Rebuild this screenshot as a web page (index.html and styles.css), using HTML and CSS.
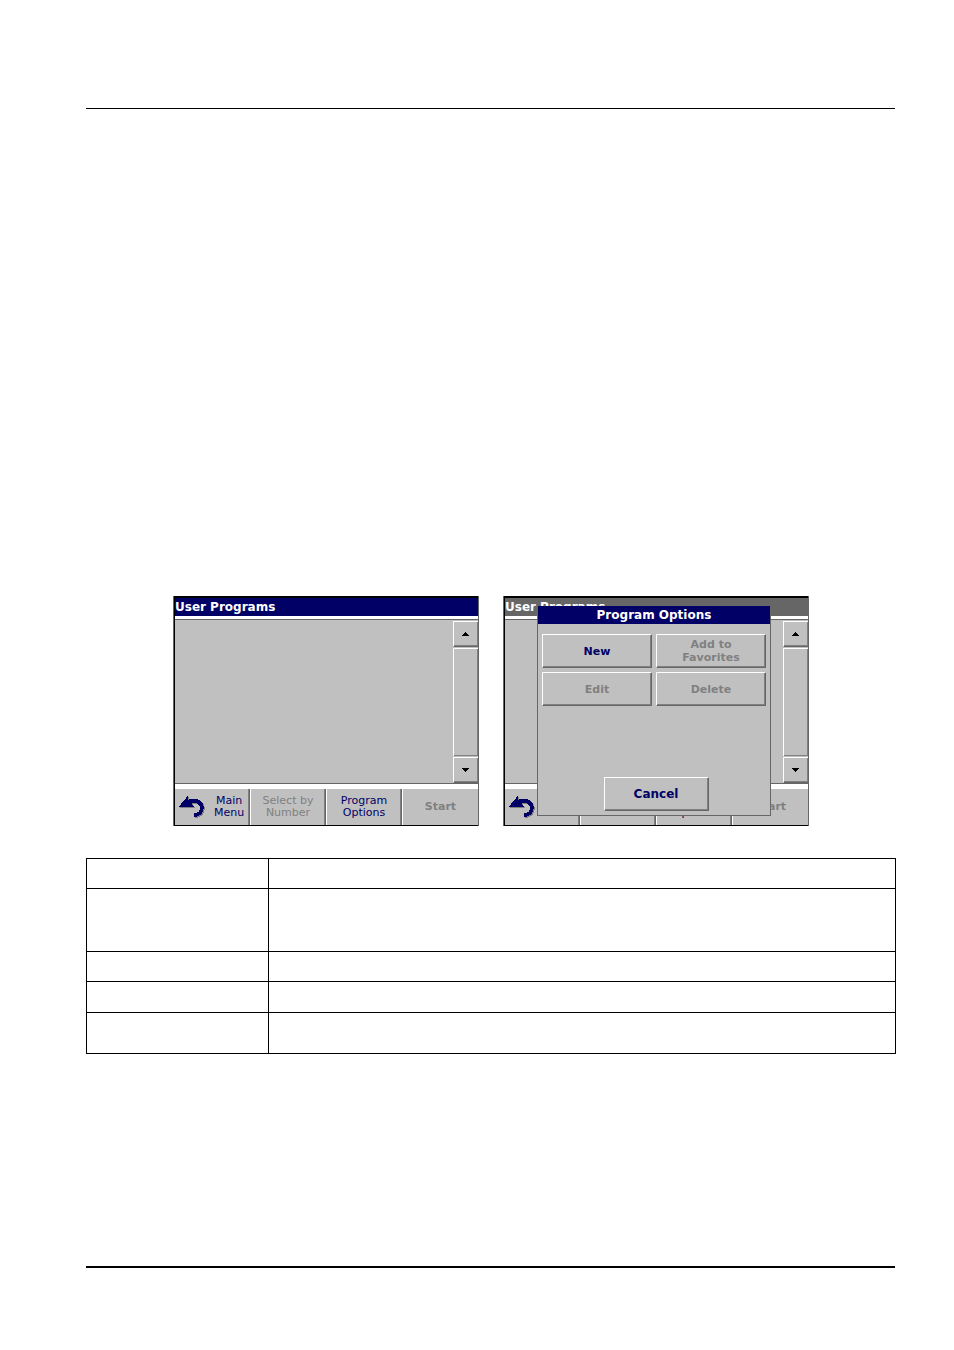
FILE: index.html
```html
<!DOCTYPE html>
<html lang="en">
<head>
<meta charset="UTF-8">
<title>User Programs</title>
<meta name="viewport" content="width=device-width, initial-scale=1.0">
<link rel="stylesheet" href="styles.css">
</head>
<body>
    <!-- shared icons -->
    <svg class="defs" width="0" height="0" aria-hidden="true">
        <symbol id="back" viewBox="0 0 27 24">
            <g transform="translate(1 1)">
                <path fill="#808080" d="M0 11.5L9 0.5V5L13 9L15 11.5Z"/>
                <path fill="none" stroke="#808080" stroke-width="4" d="M8 7.5C15 4 22.8 6 22.8 13C22.8 17 20 20 15 20"/>
            </g>
            <path fill="#006" d="M0 11.5L9 0.5V5L13 9L15 11.5Z"/>
            <path fill="none" stroke="#006" stroke-width="4" d="M8 7.5C15 4 22.8 6 22.8 13C22.8 17 20 20 15 20"/>
        </symbol>
        <symbol id="up" viewBox="0 0 7 4"><path d="M3 0h1v1h1v1h1v1h1v1H0V3h1V2h1V1h1z"/></symbol>
        <symbol id="down" viewBox="0 0 7 4"><path d="M0 0h7v1H6v1H5v1H4v1H3V3H2V2H1V1H0z"/></symbol>
    </svg>
    <header class="page-head"></header>
    <main>
        <div class="figures">
            <section class="screen">
                <div class="inner">
                    <h2 class="title">User Programs</h2>
                    <div class="list">
                        <div class="scroll">
                            <button type="button" class="step" aria-label="Scroll up"><svg width="7" height="4"><use href="#up"/></svg></button>
                            <div class="track"></div>
                            <button type="button" class="step" aria-label="Scroll down"><svg width="7" height="4"><use href="#down"/></svg></button>
                        </div>
                    </div>
                    <div class="bar">
                        <button type="button" class="back"><svg width="27" height="24"><use href="#back"/></svg><span>Main<br>Menu</span></button>
                        <button type="button" disabled>Select by<br>Number</button>
                        <button type="button">Program<br>Options</button>
                        <button type="button" class="start" disabled>Start</button>
                    </div>
                </div>
            </section>
            <section class="screen inactive">
                <div class="inner">
                    <h2 class="title">User Programs</h2>
                    <div class="list">
                        <div class="scroll">
                            <button type="button" class="step" aria-label="Scroll up"><svg width="7" height="4"><use href="#up"/></svg></button>
                            <div class="track"></div>
                            <button type="button" class="step" aria-label="Scroll down"><svg width="7" height="4"><use href="#down"/></svg></button>
                        </div>
                    </div>
                    <div class="bar">
                        <button type="button" class="back"><svg width="27" height="24"><use href="#back"/></svg><span>Main<br>Menu</span></button>
                        <button type="button" disabled>Select by<br>Number</button>
                        <button type="button">Program<br>Options</button>
                        <button type="button" class="start" disabled>Start</button>
                    </div>
                </div>
                <div class="dialog" role="dialog" aria-label="Program Options">
                    <h3>Program Options</h3>
                    <div class="options">
                        <button type="button">New</button>
                        <button type="button" disabled>Add to<br>Favorites</button>
                        <button type="button" disabled>Edit</button>
                        <button type="button" disabled>Delete</button>
                    </div>
                    <button type="button" class="cancel">Cancel</button>
                </div>
            </section>
        </div>
        <table class="options-table">
            <tbody>
                <tr><th></th><td></td></tr>
                <tr class="tall"><th></th><td></td></tr>
                <tr><th></th><td></td></tr>
                <tr class="mid"><th></th><td></td></tr>
                <tr class="last"><th></th><td></td></tr>
            </tbody>
        </table>
    </main>
    <footer class="page-foot"></footer>
</body>
</html>
```
FILE: styles.css
```css
*{margin:0;padding:0;box-sizing:border-box;}
body{min-height:100vh;display:flex;flex-direction:column;padding:108px 58px 82px 86px;background:#fff;color:#000;font-family:"DejaVu Sans",Verdana,sans-serif;font-size:11px;line-height:12px;}
svg{display:block;flex:none;shape-rendering:crispEdges;}
.defs{position:absolute;}
button{font:inherit;color:#006;background:#c0c0c0;border:0;border-radius:0;text-align:center;}
button:disabled{color:#808080;}

.page-head{border-top:1px solid #000;margin-right:1px;}
.page-foot{border-top:2px solid #000;margin:auto 1px 0 0;}
main{padding-top:487px;}

/* device screens */
.figures{display:flex;flex-wrap:wrap;justify-content:center;gap:24px;}
.screen{position:relative;width:306px;border:solid #666;border-width:0 1px;}
.inner{border:solid #000;border-width:2px 0 1px 1px;}
.title{height:18px;line-height:18px;font-size:12px;color:#fff;background:#006;}
.inactive .title{background:#666;}
.list{display:flex;justify-content:flex-end;height:165px;margin-top:3px;background:#c0c0c0;border:solid #666;border-width:1px 0;}
.scroll{display:flex;flex-direction:column;gap:1px;width:25px;padding-top:1px;}
.step{display:flex;align-items:center;justify-content:center;height:26px;padding-right:2px;border:solid #fff;border-width:1px 0 1px 1px;border-bottom-color:#666;box-shadow:inset -1px -1px #808080;}
.track{flex:1;border:solid #fff;border-width:1px 0 0 1px;box-shadow:inset -1px -1px #808080;}

.bar{display:grid;grid-template-columns:75fr 76fr 76fr 76fr;margin-top:5px;}
.bar button{height:36px;border-left:1px solid #fff;border-right:1px solid #666;box-shadow:inset -1px 0 #808080;}
.bar .back{display:flex;align-items:center;padding-left:4px;gap:8px;border-left:0;}
.bar .start{font-weight:bold;border-right:0;box-shadow:none;}

/* popup */
.dialog{position:absolute;left:33px;top:10px;width:234px;height:210px;display:flex;flex-direction:column;align-items:center;padding-bottom:4px;background:#c0c0c0;border:1px solid #666;border-top:0;font-weight:bold;}
.dialog h3{width:100%;height:18px;line-height:18px;font-size:12px;text-align:center;color:#fff;background:#006;}
.dialog button{height:34px;line-height:13px;border:1px solid #fff;border-right-color:#666;border-bottom-color:#666;box-shadow:inset -1px -1px #808080;}
.options{display:grid;grid-template-columns:1fr 1fr;gap:4px;width:100%;padding:10px 4px;}
.dialog .cancel{width:105px;margin:auto 0 0 4px;font-size:12px;}

.options-table{width:100%;margin-top:32px;border-collapse:collapse;table-layout:fixed;}
.options-table th{width:182px;}
.options-table th,.options-table td{height:30px;border:1px solid #000;}
.options-table .tall th{height:63px;}
.options-table .mid th{height:31px;}
.options-table .last th{height:41px;}

```
